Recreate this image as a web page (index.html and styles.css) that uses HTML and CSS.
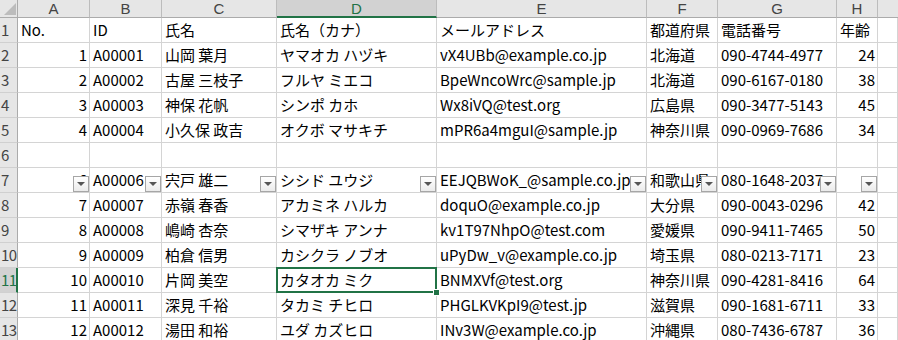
FILE: index.html
```html
<!DOCTYPE html>
<html lang="ja">
<head>
<meta charset="utf-8">
<title>Sheet</title>
<link rel="stylesheet" href="styles.css">
</head>
<body>
<div class="sheet">
  <div class="corner"></div>
  <div class="ch">A</div><div class="ch">B</div><div class="ch">C</div><div class="ch ch-sel">D</div><div class="ch">E</div><div class="ch">F</div><div class="ch">G</div><div class="ch">H</div><div class="ch ch-last"></div>

  <div class="rh">1</div>
  <div class="c">No.</div><div class="c">ID</div><div class="c">氏名</div><div class="c">氏名（カナ）</div><div class="c">メールアドレス</div><div class="c">都道府県</div><div class="c">電話番号</div><div class="c">年齢</div><div class="c"></div>

  <div class="rh">2</div>
  <div class="c n">1</div><div class="c">A00001</div><div class="c">山岡 葉月</div><div class="c">ヤマオカ ハヅキ</div><div class="c">vX4UBb@example.co.jp</div><div class="c">北海道</div><div class="c">090-4744-4977</div><div class="c n">24</div><div class="c"></div>

  <div class="rh">3</div>
  <div class="c n">2</div><div class="c">A00002</div><div class="c">古屋 三枝子</div><div class="c">フルヤ ミエコ</div><div class="c">BpeWncoWrc@sample.jp</div><div class="c">北海道</div><div class="c">090-6167-0180</div><div class="c n">38</div><div class="c"></div>

  <div class="rh">4</div>
  <div class="c n">3</div><div class="c">A00003</div><div class="c">神保 花帆</div><div class="c">シンポ カホ</div><div class="c">Wx8iVQ@test.org</div><div class="c">広島県</div><div class="c">090-3477-5143</div><div class="c n">45</div><div class="c"></div>

  <div class="rh">5</div>
  <div class="c n">4</div><div class="c">A00004</div><div class="c">小久保 政吉</div><div class="c">オクボ マサキチ</div><div class="c">mPR6a4mguI@sample.jp</div><div class="c">神奈川県</div><div class="c">090-0969-7686</div><div class="c n">34</div><div class="c"></div>

  <div class="rh">6</div>
  <div class="c"></div><div class="c"></div><div class="c"></div><div class="c"></div><div class="c"></div><div class="c"></div><div class="c"></div><div class="c"></div><div class="c"></div>

  <div class="rh">7</div>
  <div class="c n f">6<span class="fb"></span></div><div class="c f">A00006<span class="fb"></span></div><div class="c f">宍戸 雄二<span class="fb"></span></div><div class="c f">シシド ユウジ<span class="fb"></span></div><div class="c f">EEJQBWoK_@sample.co.jp<span class="fb"></span></div><div class="c f">和歌山県<span class="fb"></span></div><div class="c f">080-1648-2037<span class="fb"></span></div><div class="c n f"><span class="fb"></span></div><div class="c"></div>

  <div class="rh">8</div>
  <div class="c n">7</div><div class="c">A00007</div><div class="c">赤嶺 春香</div><div class="c">アカミネ ハルカ</div><div class="c">doquO@example.co.jp</div><div class="c">大分県</div><div class="c">090-0043-0296</div><div class="c n">42</div><div class="c"></div>

  <div class="rh">9</div>
  <div class="c n">8</div><div class="c">A00008</div><div class="c">嶋崎 杏奈</div><div class="c">シマザキ アンナ</div><div class="c">kv1T97NhpO@test.com</div><div class="c">愛媛県</div><div class="c">090-9411-7465</div><div class="c n">50</div><div class="c"></div>

  <div class="rh">10</div>
  <div class="c n">9</div><div class="c">A00009</div><div class="c">柏倉 信男</div><div class="c">カシクラ ノブオ</div><div class="c">uPyDw_v@example.co.jp</div><div class="c">埼玉県</div><div class="c">080-0213-7171</div><div class="c n">23</div><div class="c"></div>

  <div class="rh rh-sel">11</div>
  <div class="c n">10</div><div class="c">A00010</div><div class="c">片岡 美空</div><div class="c sel">カタオカ ミク</div><div class="c">BNMXVf@test.org</div><div class="c">神奈川県</div><div class="c">090-4281-8416</div><div class="c n">64</div><div class="c"></div>

  <div class="rh">12</div>
  <div class="c n">11</div><div class="c">A00011</div><div class="c">深見 千裕</div><div class="c">タカミ チヒロ</div><div class="c">PHGLKVKpI9@test.jp</div><div class="c">滋賀県</div><div class="c">090-1681-6711</div><div class="c n">33</div><div class="c"></div>

  <div class="rh">13</div>
  <div class="c n">12</div><div class="c">A00012</div><div class="c">湯田 和裕</div><div class="c">ユダ カズヒロ</div><div class="c">INv3W@example.co.jp</div><div class="c">沖縄県</div><div class="c">080-7436-6787</div><div class="c n">36</div><div class="c"></div>
</div>
</body>
</html>
```
FILE: styles.css
```css
html, body {
  margin: 0;
  padding: 0;
  background: #ffffff;
  overflow: hidden;
}

.sheet {
  display: grid;
  grid-template-columns: 18px 72px 72px 115px 160px 210px 71px 119px 41px 1fr;
  grid-template-rows: 18px;
  grid-auto-rows: 25px;
  width: 898px;
  font-family: "Noto Sans CJK JP", "Noto Sans", sans-serif;
  font-size: 15px;
  color: #000000;
}

.sheet > div {
  box-sizing: border-box;
  white-space: nowrap;
}

.corner {
  position: relative;
  background: #e6e6e6;
  border-right: 1px solid #ababab;
  border-bottom: 1px solid #ababab;
}

.corner::after {
  content: "";
  position: absolute;
  right: 1px;
  bottom: 2px;
  width: 12px;
  height: 12px;
  background: #bcbcbc;
  clip-path: polygon(100% 0, 100% 100%, 0 100%);
}

.ch {
  background: #e6e6e6;
  border-right: 1px solid #bcbcbc;
  border-bottom: 1px solid #ababab;
  text-align: center;
  color: #444444;
  font-family: "Liberation Sans", "Noto Sans", sans-serif;
  font-size: 15px;
  line-height: 17px;
  overflow: visible;
}

.ch-sel {
  background: #d2d2d2;
  color: #217346;
  border-bottom: 2px solid #217346;
}

.ch-last {
  border-right: none;
}

.rh {
  background: #e6e6e6;
  border-right: 1px solid #ababab;
  border-bottom: 1px solid #d0d0d0;
  color: #444444;
  padding-left: 1px;
  line-height: 24px;
  overflow: hidden;
  letter-spacing: -0.5px;
}

.rh-sel {
  background: #d2d2d2;
  color: #217346;
  border-right: 2px solid #217346;
}

.c {
  position: relative;
  border-right: 1px solid #d4d4d4;
  border-bottom: 1px solid #d4d4d4;
  padding: 0 2px 0 3px;
  line-height: 24px;
  overflow: hidden;
}

.n {
  text-align: right;
}

.sel {
  overflow: visible;
}

.sel::after {
  content: "";
  position: absolute;
  left: -1px;
  top: -1px;
  right: -1px;
  bottom: -1px;
  border: 2px solid #217346;
  z-index: 2;
}

.sel::before {
  content: "";
  position: absolute;
  right: -4px;
  bottom: -4px;
  width: 5px;
  height: 5px;
  background: #217346;
  border: 1px solid #ffffff;
  z-index: 3;
}

.fb {
  position: absolute;
  right: 0;
  bottom: 0;
  width: 16px;
  height: 16px;
  box-sizing: border-box;
  border: 1px solid #a6a6a6;
  background: linear-gradient(#ffffff, #ebebeb);
}

.fb::after {
  content: "";
  position: absolute;
  left: 3px;
  top: 5px;
  width: 0;
  height: 0;
  border-left: 4px solid transparent;
  border-right: 4px solid transparent;
  border-top: 4px solid #555555;
}
```
